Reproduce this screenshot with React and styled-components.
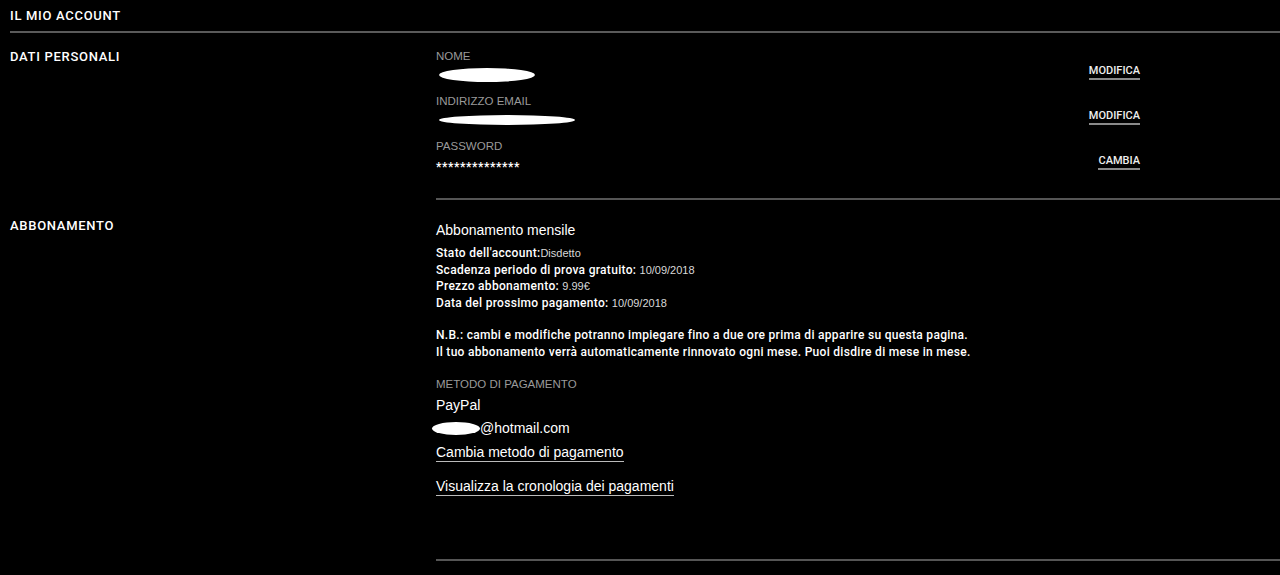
import React from 'react'
import styled, { createGlobalStyle } from 'styled-components'

const Global = createGlobalStyle`
  html, body { margin: 0; padding: 0; background: #000; }
  body { font-family: Roboto, "Liberation Sans", sans-serif; color: #fff; }
`

const Page = styled.div`
  background: #000;
  min-height: 575px;
  overflow: hidden;
`

const Header = styled.div`
  margin-left: 10px;
  height: 31px;
  border-bottom: 2px solid #5a5a5a;
  display: flex;
  align-items: center;
`

const Heading = styled.h2`
  margin: 0;
  font-family: Roboto, sans-serif;
  font-weight: 500;
  font-size: 13px;
  letter-spacing: 0.7px;
  color: #fff;
`

const Section = styled.section`
  display: grid;
  grid-template-columns: 436px 1fr;
  padding-top: ${p => p.top}px;
`

const SideLabel = styled(Heading)`
  padding-left: 10px;
  padding-top: ${p => p.offset || 0}px;
`

const Content = styled.div`
  border-bottom: 2px solid #555;
  padding-bottom: ${p => p.bottom}px;
  min-height: ${p => p.minH || 0}px;
`

const Field = styled.div`
  display: grid;
  grid-template-columns: 1fr auto;
  align-items: end;
  width: 704px;
  height: 45px;
`

const FieldLabel = styled.div`
  font-family: "Liberation Sans", Arial, sans-serif;
  font-size: 11.5px;
  color: #9a9a9a;
  line-height: 14px;
  margin-bottom: 4px;
`

const Blob = styled.span`
  display: inline-block;
  width: ${p => p.w}px;
  height: ${p => p.h}px;
  background: #fff;
  border-radius: 50%;
  vertical-align: middle;
  margin-left: ${p => p.ml || 0}px;
`

const Value = styled.div`
  height: 16px;
  display: flex;
  align-items: center;
`

const Stars = styled.div`
  font-family: Roboto, sans-serif;
  font-weight: 700;
  font-size: 12px;
  letter-spacing: 0.55px;
  line-height: 16px;
  height: 16px;
  padding-top: 2px;
  margin-bottom: -2px;
`

const Action = styled.a`
  font-family: Roboto, sans-serif;
  font-weight: 500;
  font-size: 11px;
  color: #eee;
  text-decoration: none;
  border-bottom: 2px solid #8a8a8a;
  padding-bottom: 1px;
  margin-bottom: 3px;
  line-height: 12px;
  cursor: pointer;
`

const PlanTitle = styled.div`
  font-family: "Liberation Sans", Arial, sans-serif;
  font-size: 14px;
  line-height: 18px;
  margin-bottom: 6px;
`

const InfoLine = styled.div`
  font-family: Roboto, sans-serif;
  font-weight: 500;
  font-size: 12px;
  letter-spacing: 0.3px;
  line-height: 16.5px;
  color: #fff;
  margin-top: ${p => p.gap || 0}px;
`

const Light = styled.span`
  font-family: "Liberation Sans", Arial, sans-serif;
  font-weight: 400;
  font-size: 11px;
  letter-spacing: 0;
  color: #d8d8d8;
`

const MethodLabel = styled(FieldLabel)`
  margin: 17px 0 5px;
`

const Plain = styled.div`
  font-family: "Liberation Sans", Arial, sans-serif;
  font-size: 14px;
  line-height: 18px;
  margin-bottom: 5px;
  display: flex;
  align-items: center;
`

const TextLink = styled.a`
  display: inline-block;
  font-family: "Liberation Sans", Arial, sans-serif;
  font-size: 14px;
  line-height: 17px;
  color: #fff;
  text-decoration: none;
  border-bottom: 1px solid #bbb;
  margin-bottom: ${p => p.mb || 0}px;
  cursor: pointer;
`

const Plan = styled.div`
  padding-top: 21px;
`

const personal = [
  { label: 'NOME', blob: { w: 96, h: 14 }, action: 'MODIFICA' },
  { label: 'INDIRIZZO EMAIL', blob: { w: 136, h: 10 }, action: 'MODIFICA' },
  { label: 'PASSWORD', stars: '**************', action: 'CAMBIA' },
]

const details = [
  ['Stato dell\'account:', 'Disdetto'],
  ['Scadenza periodo di prova gratuito: ', '10/09/2018'],
  ['Prezzo abbonamento: ', '9.99€'],
  ['Data del prossimo pagamento: ', '10/09/2018'],
]

export default function App() {
  return (
    <Page>
      <Global />
      <Header>
        <Heading>IL MIO ACCOUNT</Heading>
      </Header>

      <Section top={5}>
        <SideLabel offset={11}>DATI PERSONALI</SideLabel>
        <Content bottom={25}>
          {personal.map(f => (
            <Field key={f.label}>
              <div>
                <FieldLabel>{f.label}</FieldLabel>
                {f.stars ? <Stars>{f.stars}</Stars> : (
                  <Value><Blob w={f.blob.w} h={f.blob.h} ml={3} /></Value>
                )}
              </div>
              <Action>{f.action}</Action>
            </Field>
          ))}
        </Content>
      </Section>

      <Section top={0}>
        <SideLabel offset={18}>ABBONAMENTO</SideLabel>
        <Content minH={359} bottom={0}>
          <Plan>
            <PlanTitle>Abbonamento mensile</PlanTitle>
            {details.map(([k, v]) => (
              <InfoLine key={k}>{k}<Light>{v}</Light></InfoLine>
            ))}
            <InfoLine gap={16}>N.B.: cambi e modifiche potranno impiegare fino a due ore prima di apparire su questa pagina.</InfoLine>
            <InfoLine>Il tuo abbonamento verrà automaticamente rinnovato ogni mese. Puoi disdire di mese in mese.</InfoLine>
            <MethodLabel>METODO DI PAGAMENTO</MethodLabel>
            <Plain>PayPal</Plain>
            <Plain><Blob w={48} h={13} ml={-4} />@hotmail.com</Plain>
            <TextLink mb={14}>Cambia metodo di pagamento</TextLink>
            <br />
            <TextLink>Visualizza la cronologia dei pagamenti</TextLink>
          </Plan>
        </Content>
      </Section>
    </Page>
  )
}
